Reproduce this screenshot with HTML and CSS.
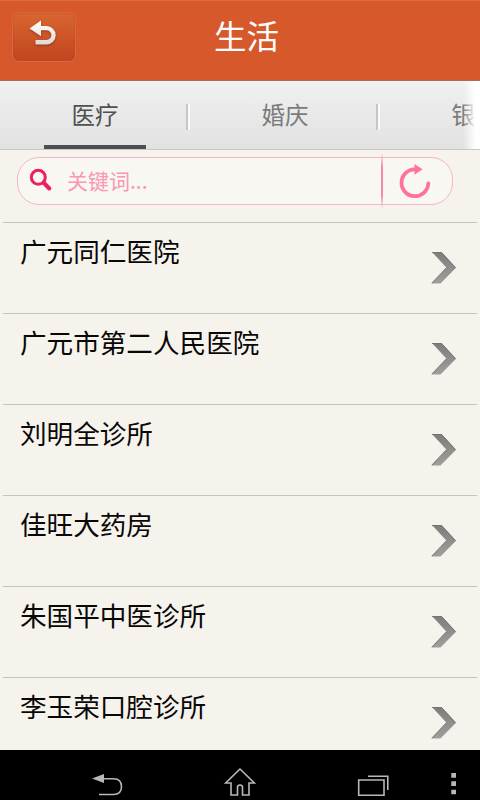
FILE: index.html
```html
<!DOCTYPE html>
<html lang="zh-CN">
<head>
<meta charset="utf-8">
<title>生活</title>
<link rel="stylesheet" href="styles.css">
</head>
<body>
<div class="screen">
  <header class="header">
    <button class="back" aria-label="返回">
      <svg width="64" height="50" viewBox="0 0 64 50">
        <defs><linearGradient id="backFill" x1="0" y1="9" x2="0" y2="34" gradientUnits="userSpaceOnUse"><stop offset="0" stop-color="#fff"/><stop offset="1" stop-color="#ddd6d0"/></linearGradient></defs>
        <path d="M17.500 16.500 29 8.500V14h5.500a9.200 9.200 0 0 1 0 18.400H23.500v-4.400h11a4.900 4.900 0 0 0 0-9.800H29v6z" fill="url(#backFill)"/>
      </svg>
    </button>
    <h1 class="title">生活</h1>
  </header>
  <nav class="tabs">
    <a class="tab active">医疗</a>
    <a class="tab">婚庆</a>
    <a class="tab">银行</a>
  </nav>
  <div class="search-area">
    <div class="search">
      <svg class="magnifier" width="24" height="24" viewBox="0 0 24 24" fill="none" stroke="#f01e60">
        <circle cx="9.300" cy="9.300" r="7" stroke-width="3"/>
        <path d="M14.500 14.500 20.300 20.500" stroke-width="4" stroke-linecap="round"/>
      </svg>
      <span class="placeholder">关键词...</span>
      <span class="divider"></span>
      <svg class="refresh" width="34" height="36" viewBox="0 0 34 36">
        <path d="M30.300 19.300A13.400 13.400 0 1 1 17 5.400" fill="none" stroke="#ff719f" stroke-width="3.800" stroke-linecap="round"/>
        <path d="M16.500 0 24.500 5.300 16.500 10.800z" fill="#ff719f"/>
      </svg>
    </div>
  </div>
  <main class="list">
    <div class="row"><span>广元同仁医院</span><svg class="chevron" width="26" height="34" viewBox="0 0 26 34"><use href="#chevron"/></svg></div>
    <div class="row"><span>广元市第二人民医院</span><svg class="chevron" width="26" height="34" viewBox="0 0 26 34"><use href="#chevron"/></svg></div>
    <div class="row"><span>刘明全诊所</span><svg class="chevron" width="26" height="34" viewBox="0 0 26 34"><use href="#chevron"/></svg></div>
    <div class="row"><span>佳旺大药房</span><svg class="chevron" width="26" height="34" viewBox="0 0 26 34"><use href="#chevron"/></svg></div>
    <div class="row"><span>朱国平中医诊所</span><svg class="chevron" width="26" height="34" viewBox="0 0 26 34"><use href="#chevron"/></svg></div>
    <div class="row"><span>李玉荣口腔诊所</span><svg class="chevron" width="26" height="34" viewBox="0 0 26 34"><use href="#chevron"/></svg></div>
  </main>
  <footer class="navbar">
    <svg width="480" height="50" viewBox="0 0 480 50" fill="none" stroke="#b8b8b8" stroke-width="1.600">
      <path d="M103 28.700h10.500c5 0 8 3 8 7.900s-3 7.900-8 7.900H99"/>
      <path d="M92 28.500 104 24v9z" fill="#b8b8b8" stroke="none"/>
      <path d="M240 19 225.700 33H231v12h6.500v-7.500a2.500 2.500 0 0 1 5 0V45h6.500V33h5.300z"/>
      <path d="M358.700 30h25.300v15.300h-25.300zM368 26.200h19.800V40"/>
      <path d="M451.300 23h4.700v4.700h-4.700zM451.300 31.300h4.700V36h-4.700zM451.300 39.700h4.700v4.600h-4.700z" fill="#b8b8b8" stroke="none"/>
    </svg>
  </footer>
</div>
<svg class="symbols" width="0" height="0">
  <defs>
    <linearGradient id="chevronFill" x1="0" y1="0" x2="0" y2="1"><stop offset="0" stop-color="#807c7c"/><stop offset="0.600" stop-color="#949090"/><stop offset="1" stop-color="#a29e9c"/></linearGradient>
    <g id="chevron">
      <path d="M1 1h9.500L25 16.700 9.500 32.500H.5L15.500 16.700z" fill="url(#chevronFill)"/>
      <path d="M1 1.500h9.500L24.500 16.700M15.500 16.700.8 32.200" fill="none" stroke="#777373"/>
    </g>
  </defs>
</svg>
</body>
</html>
```

FILE: styles.css
```css
* { box-sizing: border-box; }

body {
  margin: 0;
  font-family: "Noto Sans CJK SC", sans-serif;
}

.screen {
  width: 480px;
  height: 800px;
  overflow: hidden;
  display: flex;
  flex-direction: column;
  background: #f6f3ec;
}

.header {
  flex: none;
  height: 81px;
  display: grid;
  grid-template-columns: 76px 1fr 62px;
  padding: 11px 0 0 12px;
  background: #d7592b;
  border-top: 1px solid #dc6d45;
  border-bottom: 1px solid #a96c5b;
}

.back {
  width: 64px;
  height: 50px;
  padding: 0;
  border: 1px solid #d96840;
  border-radius: 7px;
  background: linear-gradient(#d96530, #c14520);
  box-shadow: inset 0 0 2px #b74b24;
}

.back svg {
  display: block;
  margin: -1px;
  filter: drop-shadow(0 1px 1px rgba(90, 25, 0, .5));
}

.title {
  margin: 0;
  color: #fff;
  font-size: 32.500px;
  font-weight: 400;
  line-height: 46px;
  text-align: center;
  padding-right: 13px;
}

.tabs {
  position: relative;
  flex: none;
  height: 69px;
  display: flex;
  overflow: hidden;
  background: linear-gradient(#f0f0f0, #e2e2e2);
  border-bottom: 1px solid #c7c7c9;
}

.tabs::after {
  content: "";
  position: absolute;
  top: 0;
  right: 0;
  width: 17px;
  height: 69px;
  background: linear-gradient(90deg, rgba(255, 255, 255, 0), #fff 75%);
}

.tab {
  position: relative;
  flex: 0 0 190px;
  color: #7b7b7b;
  font-size: 23.500px;
  line-height: 66px;
  text-align: center;
}

.tab::after {
  content: "";
  position: absolute;
  top: 23px;
  right: 0;
  width: 4px;
  height: 26px;
  background: linear-gradient(90deg, #c6c6c6 50%, #fafafa 50%);
}

.tab.active { color: #4f5050; }

.tab.active::before {
  content: "";
  position: absolute;
  left: 44px;
  bottom: 0;
  width: 102px;
  height: 4px;
  background: #4c4e50;
}

.search-area {
  flex: none;
  height: 72px;
  padding: 7px 27px 0 17px;
}

.search {
  height: 48px;
  display: flex;
  align-items: center;
  background: #f9f7f2;
  border: 1.500px solid #f6b5c5;
  border-radius: 22px;
}

.magnifier { margin: 0 0 2px 11px; }

.placeholder {
  margin: 0 0 3px 14px;
  width: 314px;
  color: #f896b3;
  font-size: 21px;
  line-height: 44px;
}

.divider {
  flex: none;
  width: 2px;
  height: 56px;
  background: linear-gradient(rgba(246, 137, 169, 0), #f689a9 25%, #f689a9 75%, rgba(246, 137, 169, 0));
}

.refresh { margin: 2px 0 0 15px; }

.list {
  flex: none;
  height: 528px;
  padding: 0 3px;
  overflow: hidden;
}

.row {
  height: 91px;
  display: flex;
  justify-content: space-between;
  padding: 8px 20px 0 17px;
  border-top: 1px solid #c6c3be;
  color: #080808;
  font-size: 26.600px;
  line-height: 39px;
}

.chevron { margin-top: 20px; }

.symbols { position: absolute; }

.navbar {
  flex: none;
  height: 50px;
  background: #000;
}

.navbar svg { display: block; }
```
